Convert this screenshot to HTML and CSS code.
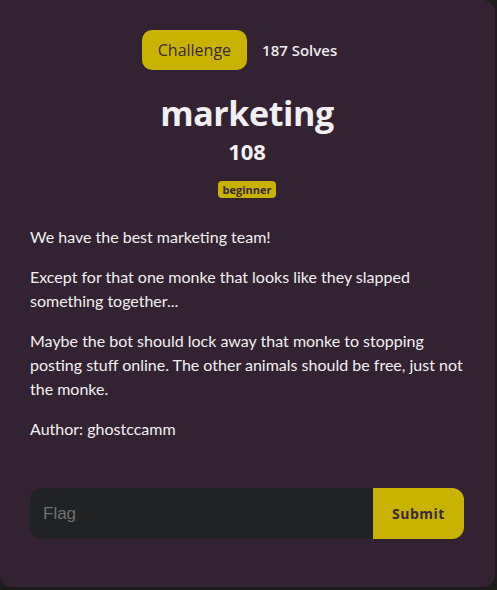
FILE: index.html
```html
<!DOCTYPE html>
<html>
<head>
<meta charset="utf-8">
<link rel="stylesheet" href="styles.css">
</head>
<body>
<div class="modal">
  <div class="tabs">
    <span class="tab active">Challenge</span>
    <span class="tab">187 Solves</span>
  </div>
  <h1 class="title">marketing</h1>
  <div class="points">108</div>
  <div class="tags"><span class="tag">beginner</span></div>
  <div class="desc">
    <p>We have the best marketing team!</p>
    <p>Except for that one monke that looks like they slapped something together...</p>
    <p>Maybe the bot should lock away that monke to stopping posting stuff online. The other animals should be free, just not the monke.</p>
    <p>Author: ghostccamm</p>
  </div>
  <form class="flag-form">
    <input class="flag-input" type="text" placeholder="Flag">
    <button class="submit" type="button">Submit</button>
  </form>
</div>
</body>
</html>
```
FILE: styles.css
```css
html, body {
  margin: 0;
  padding: 0;
  background: #1c1c1a;
  width: 497px;
  height: 590px;
  overflow: hidden;
}
.modal {
  box-sizing: border-box;
  width: 495px;
  height: 587px;
  background: #332231;
  border-radius: 0 12px 12px 12px;
  padding: 30px 31px 0 30px;
  color: #f2f0f2;
  font-family: Lato, "Liberation Sans", sans-serif;
}
.tabs {
  display: flex;
  justify-content: center;
  align-items: center;
  gap: 15px;
  padding-right: 15px;
}
.tab {
  font-family: "Open Sans", Lato, sans-serif;
  font-size: 15px;
  font-weight: 600;
  color: #eeeaee;
  height: 40px;
  line-height: 40px;
}
.tab.active {
  background: #c8b400;
  color: #3a2a38;
  font-size: 16px;
  font-weight: 500;
  border-radius: 10px;
  padding: 0 16px;
}
.title {
  margin: 23px 0 0;
  text-align: center;
  font-family: "Open Sans", Lato, sans-serif;
  font-size: 34px;
  font-weight: 700;
  line-height: 40px;
  color: #f1eff1;
  letter-spacing: -0.4px;
}
.points {
  text-align: center;
  font-family: "Open Sans", Lato, sans-serif;
  font-size: 22px;
  font-weight: 700;
  line-height: 28px;
  margin-top: 4px;
}
.tags {
  display: flex;
  justify-content: center;
  margin-top: 16px;
}
.tag {
  background: #c8b400;
  color: #3a2a38;
  font-family: "Open Sans", Lato, sans-serif;
  font-size: 11px;
  font-weight: 700;
  line-height: 17px;
  padding: 0 5px;
  border-radius: 4px;
}
.desc {
  margin-top: 27px;
  font-size: 16px;
  line-height: 24px;
}
.desc p {
  margin: 0 0 16px;
}
.desc p:last-child {
  margin-bottom: 0;
}
.flag-form {
  display: flex;
  margin: 47px 0 0;
  height: 51px;
  border-radius: 12px;
  overflow: hidden;
}
.flag-input {
  flex: 1;
  min-width: 0;
  border: none;
  outline: none;
  background: #212224;
  color: #ddd;
  font-family: "Liberation Sans", Arial, sans-serif;
  font-size: 17px;
  padding: 0 13px;
  margin: 0;
}
.flag-input::placeholder {
  color: #6e7076;
}
.submit {
  width: 91px;
  border: none;
  background: #c8b400;
  color: #3a2a38;
  font-family: "Open Sans", Lato, sans-serif;
  font-size: 14px;
  font-weight: 700;
  letter-spacing: 0.5px;
  margin: 0;
  padding: 0;
}
```
